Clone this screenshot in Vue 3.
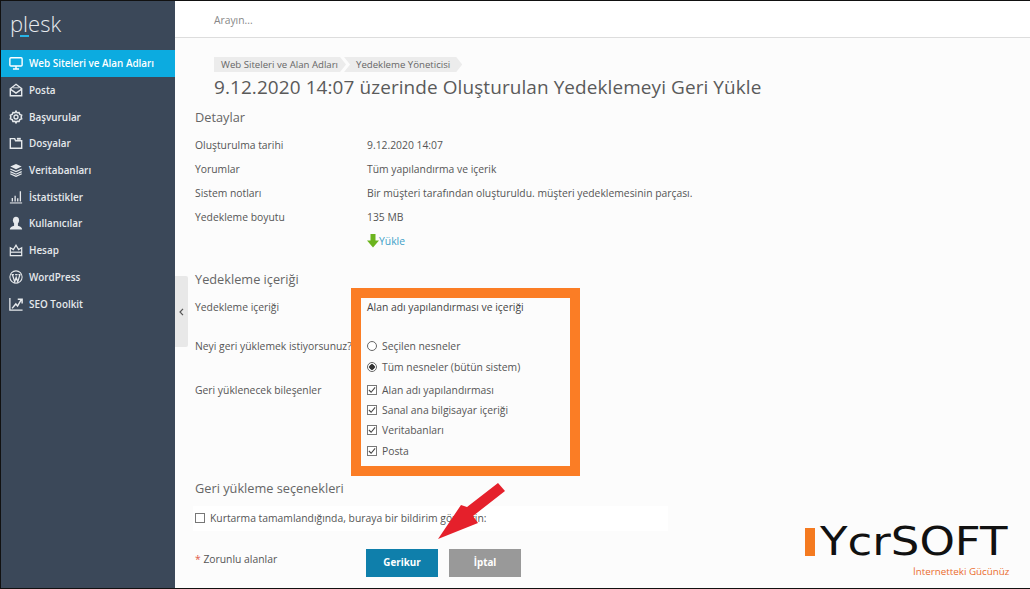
<script setup>
const nav = [
  { label: 'Web Siteleri ve Alan Adları', icon: 'monitor', active: true },
  { label: 'Posta', icon: 'mail' },
  { label: 'Başvurular', icon: 'gear' },
  { label: 'Dosyalar', icon: 'folder' },
  { label: 'Veritabanları', icon: 'db' },
  { label: 'İstatistikler', icon: 'chart' },
  { label: 'Kullanıcılar', icon: 'user' },
  { label: 'Hesap', icon: 'crown' },
  { label: 'WordPress', icon: 'wp' },
  { label: 'SEO Toolkit', icon: 'seo' }
]
const details = [
  ['Oluşturulma tarihi', '9.12.2020 14:07'],
  ['Yorumlar', 'Tüm yapılandırma ve içerik'],
  ['Sistem notları', 'Bir müşteri tarafından oluşturuldu. müşteri yedeklemesinin parçası.'],
  ['Yedekleme boyutu', '135 MB']
]
const components = ['Alan adı yapılandırması', 'Sanal ana bilgisayar içeriği', 'Veritabanları', 'Posta']
</script>

<template>
  <div class="frame">
    <aside class="sidebar">
      <div class="logo">p<span class="logo-l">l</span>esk</div>
      <nav class="nav">
        <a v-for="item in nav" :key="item.label" class="nav-item" :class="{ active: item.active }">
          <svg class="nav-icon" viewBox="0 0 16 16" fill="none" stroke="currentColor" stroke-width="1.6">
            <template v-if="item.icon === 'monitor'">
              <rect x="1" y="2" width="14" height="9.5" rx="1.2" />
              <path d="M4.500 14.800h7M8 11.500v3" />
            </template>
            <template v-else-if="item.icon === 'mail'">
              <path d="M1.500 6.500 8 1.500l6.500 5V14.500h-13z" />
              <path d="m1.500 7 6.500 4.500L14.500 7" />
              <path d="M4.500 5.500h7" stroke-width="1" />
            </template>
            <template v-else-if="item.icon === 'gear'">
              <path d="m8 1.300 1.200 1.900 2.300-.3.8 2.100 2.200.9-.6 2.100.6 2.100-2.200.9-.8 2.100-2.300-.3L8 14.700l-1.200-1.900-2.300.3-.8-2.100-2.200-.9.6-2.100-.6-2.100 2.200-.9.8-2.100 2.300.3z" stroke-width="1.700" />
              <circle cx="8" cy="8" r="2.300" stroke-width="1.500" />
            </template>
            <template v-else-if="item.icon === 'folder'">
              <path d="M1.500 3v11h13V5.500H7.500L6.500 3z" />
              <path stroke-width="2.200" d="M9 3.200h4.500" />
            </template>
            <template v-else-if="item.icon === 'db'">
              <path d="m8 1 6.500 3L8 7 1.500 4z" fill="currentColor" stroke="none" />
              <path d="m1.500 6.800 6.500 3 6.500-3M1.500 9.800l6.500 3 6.500-3M1.500 12.300 8 15.300l6.500-3" stroke-width="1.400" />
            </template>
            <template v-else-if="item.icon === 'chart'">
              <path d="M1 14.800h14" stroke-width="1.200" />
              <path d="M3.800 13V9M7 13V6.500M10 13V9.500M13 13V1.500" stroke-width="1.500" />
            </template>
            <template v-else-if="item.icon === 'user'">
              <ellipse cx="8" cy="4.800" rx="3.500" ry="4" fill="currentColor" stroke="none" />
              <path d="M1 15.500c0-3 2.800-4 4.800-4.500V7.500h4.400V11c2 .5 4.800 1.500 4.800 4.500z" fill="currentColor" stroke="none" />
            </template>
            <template v-else-if="item.icon === 'crown'">
              <path d="m1.500 5.500 3.500 2L8 2.500l3 5 3.500-2v9h-13z" stroke-width="1.400" />
              <path d="M1.500 10.500h13" stroke-width="1.400" />
            </template>
            <template v-else-if="item.icon === 'wp'">
              <circle cx="8" cy="8" r="7" stroke-width="1.200" />
              <path d="M3.800 5.200 6.500 13.500 8.200 8.500 10 13.500 12.500 5.200M2.800 5.200h2.800M7 5.200h2.800M10.800 5.200h2.400" stroke-width="1.400" />
            </template>
            <template v-else>
              <path d="M1 1v14h14.500" stroke-width="1.500" />
              <path d="m3.500 13 4.300-5 2 2.300L14 3M10 2.500h5v5" stroke-width="1.700" />
            </template>
          </svg>
          <span>{{ item.label }}</span>
        </a>
      </nav>
    </aside>

    <div class="main">
      <header class="topbar"><span class="search">Arayın...</span></header>
      <button class="collapse" aria-label="Daralt">
        <svg width="5" height="8" viewBox="0 0 5 8" fill="none" stroke="#555" stroke-width="1.200"><path d="M4 .8 1 4l3 3.200" /></svg>
      </button>

      <div class="content">
        <div class="head">
          <div class="crumbs">
            <span class="crumb first">Web Siteleri ve Alan Adları</span>
            <span class="crumb">Yedekleme Yöneticisi</span>
          </div>
          <h1>9.12.2020 14:07 üzerinde Oluşturulan Yedeklemeyi Geri Yükle</h1>
        </div>

        <h2 class="section first-section">Detaylar</h2>
        <div v-for="d in details" :key="d[0]" class="row">
          <span class="label">{{ d[0] }}</span><span class="value">{{ d[1] }}</span>
        </div>
        <div class="row">
          <span class="label"></span>
          <a class="download">
            <svg width="12" height="14" viewBox="0 0 12 14"><path d="M3.500 0h5v6.500H12L6 13.500 0 6.500h3.500z" fill="#6cb41e" /></svg>Yükle
          </a>
        </div>

        <h2 class="section second-section">Yedekleme içeriği</h2>
        <div class="row row-content">
          <span class="label">Yedekleme içeriği</span><span class="value dark">Alan adı yapılandırması ve içeriği</span>
        </div>
        <div class="row row-what">
          <span class="label">Neyi geri yüklemek istiyorsunuz?</span>
          <div class="options shifted">
            <label class="option radio-opt"><span class="radio"></span>Seçilen nesneler</label>
            <label class="option radio-opt"><span class="radio on"></span>Tüm nesneler (bütün sistem)</label>
          </div>
        </div>
        <div class="row row-comp">
          <span class="label">Geri yüklenecek bileşenler</span>
          <div class="options">
            <label v-for="c in components" :key="c" class="option check-opt">
              <span class="check">
                <svg width="9" height="8" viewBox="0 0 9 8" fill="none" stroke="#444" stroke-width="1.200"><path d="m1 4 2.500 2.500L8 1" /></svg>
              </span>{{ c }}
            </label>
          </div>
        </div>

        <h2 class="section third-section">Geri yükleme seçenekleri</h2>
        <div class="notify">
          <span class="check"></span>Kurtarma tamamlandığında, buraya bir bildirim gönderin:
        </div>
        <div class="actions">
          <span class="required"><i>*</i> Zorunlu alanlar</span>
          <button class="btn primary">Gerikur</button>
          <button class="btn cancel">İptal</button>
        </div>
      </div>
    </div>

    <div class="highlight"></div>
    <svg class="arrow" width="68" height="57" viewBox="0 0 68 57">
      <path d="M60 0 67 8 35 33 40 40 0 56 23 22 29 24z" fill="#e5202b" />
    </svg>
    <div class="brand">
      <div class="brand-main"><span class="brand-bar"></span><span class="brand-name">YcrSOFT</span></div>
      <div class="brand-sub">İnternetteki Gücünüz</div>
    </div>
  </div>
</template>

<style>
html, body { margin: 0; background: #fcfcfc; overflow: hidden; }
</style>

<style scoped>
.frame {
  position: relative;
  display: flex;
  box-sizing: border-box;
  width: 1030px;
  height: 589px;
  overflow: hidden;
  border-top: 1px solid #111;
  border-bottom: 1px solid #111;
  border-left: 1px solid #111;
  font-family: "Open Sans", "Liberation Sans", sans-serif;
  color: #555;
  background: #fcfcfc;
}
.sidebar {
  flex: none;
  width: 174px;
  background: #3b4859;
  color: #fff;
}
.logo {
  box-sizing: border-box;
  height: 49px;
  padding-left: 9px;
  font-size: 22px;
  line-height: 44px;
  font-weight: 300;
  color: #e8ebee;
}
.logo-l { position: relative; }
.logo-l::after {
  content: "";
  position: absolute;
  left: -3px;
  top: 27px;
  width: 9px;
  height: 1.500px;
  background: #28b4e6;
}
.nav { display: flex; flex-direction: column; }
.nav-item {
  display: flex;
  align-items: center;
  gap: 6px;
  height: 26.700px;
  padding-left: 8px;
  font-size: 9.900px;
  font-weight: 600;
  color: #e6e9ec;
}
.nav-item.active {
  background: #0cabe0;
  color: #fff;
}
.nav-icon { width: 14px; height: 14px; flex: none; }
.main {
  position: relative;
  flex: 1;
  min-width: 0;
}
.topbar {
  box-sizing: border-box;
  height: 37px;
  padding-left: 39px;
  line-height: 35px;
  background: #fff;
  border-bottom: 1px solid #ddd;
}
.search { font-size: 10.300px; color: #888; }
.collapse {
  position: absolute;
  left: 0;
  top: 275px;
  display: flex;
  align-items: center;
  justify-content: center;
  width: 13px;
  height: 71px;
  padding: 0;
  border: 0;
  border-radius: 0 2px 2px 0;
  background: #e8e8e8;
}
.content { padding: 19px 0 0 20px; }
.head { padding-left: 19px; }
.crumbs {
  display: flex;
  height: 15px;
  font-size: 9.650px;
  line-height: 15px;
  color: #666;
}
.crumb {
  padding: 0 12px 0 12px;
  margin-right: -2px;
  background: #ececec;
  clip-path: polygon(0 0, calc(100% - 6px) 0, 100% 50%, calc(100% - 6px) 100%, 0 100%, 6px 50%);
}
.crumb.first {
  padding: 0 8px 0 7px;
  clip-path: polygon(0 0, calc(100% - 6px) 0, 100% 50%, calc(100% - 6px) 100%, 0 100%);
}
h1 {
  margin: 1px 0 0;
  font-size: 18.950px;
  line-height: 29px;
  font-weight: 400;
  color: #5a5a5a;
  letter-spacing: 0.1px;
}
.section {
  margin: 0;
  font-size: 12.750px;
  line-height: 18px;
  font-weight: 400;
  color: #666;
}
.first-section { margin-top: 6px; margin-bottom: 7px; }
.second-section { margin-top: 17px; margin-bottom: 13px; }
.third-section { margin-top: 18px; margin-bottom: 9px; }
.row {
  display: flex;
  min-height: 24px;
  align-items: center;
  font-size: 10.350px;
}
.label { flex: none; width: 172px; color: #555; white-space: nowrap; }
.value { color: #555; }
.value.dark { color: #444; }
.download {
  display: flex;
  align-items: center;
  color: #3c9fc8;
}
.row-content { align-items: flex-start; min-height: 35px; line-height: 13px; }
.row-what { align-items: flex-start; min-height: 44px; }
.row-what .label { line-height: 21px; }
.row-comp { align-items: flex-start; }
.row-comp .label { line-height: 20px; }
.options { display: flex; flex-direction: column; }
.options.shifted { margin-top: -1px; }
.option { display: flex; align-items: center; gap: 5px; color: #555; }
.radio-opt { height: 21.500px; }
.check-opt { height: 20.200px; }
.radio {
  box-sizing: border-box;
  width: 10px;
  height: 10px;
  border: 1px solid #666;
  border-radius: 50%;
  background: #fff;
}
.radio.on {
  background: radial-gradient(circle, #333 0 2.500px, #fff 3px);
}
.check {
  box-sizing: border-box;
  display: flex;
  align-items: center;
  justify-content: center;
  width: 10px;
  height: 10px;
  border: 1px solid #777;
  background: #fff;
}
.notify {
  display: flex;
  align-items: center;
  gap: 5px;
  box-sizing: border-box;
  width: 475px;
  height: 25px;
  margin-left: -2px;
  padding-left: 2px;
  font-size: 10.350px;
  background: #fff;
  color: #555;
}
.actions {
  display: flex;
  align-items: flex-start;
  margin-top: 18px;
}
.required {
  width: 171px;
  padding-top: 1px;
  font-size: 10.350px;
  line-height: 18px;
  color: #555;
}
.required i { color: #e05a4a; font-style: normal; }
.btn {
  width: 72px;
  height: 28px;
  margin-right: 11px;
  border: 0;
  font-family: inherit;
  font-size: 9.800px;
  font-weight: 700;
  color: #fff;
}
.primary { background: #0f7fab; }
.cancel { background: #999; }
.highlight {
  position: absolute;
  left: 350px;
  top: 287px;
  box-sizing: border-box;
  width: 229px;
  height: 188px;
  border: 10px solid #fb7d25;
}
.arrow { position: absolute; left: 437px; top: 482px; }
.brand {
  position: absolute;
  left: 804px;
  top: 527px;
  width: 215px;
}
.brand-main {
  display: flex;
  align-items: center;
  height: 28px;
  font-family: "DejaVu Sans", sans-serif;
  font-size: 38.500px;
  line-height: 28px;
  color: #111;
}
.brand-name {
  display: inline-block;
  transform: scaleX(1.17);
  transform-origin: left center;
}
.brand-bar {
  flex: none;
  width: 10px;
  height: 28px;
  margin-right: 5px;
  background: #f47a20;
}
.brand-sub {
  position: absolute;
  left: 108px;
  top: 37px;
  font-size: 9.800px;
  line-height: 14px;
  color: #ea6a2c;
  white-space: nowrap;
}
</style>
